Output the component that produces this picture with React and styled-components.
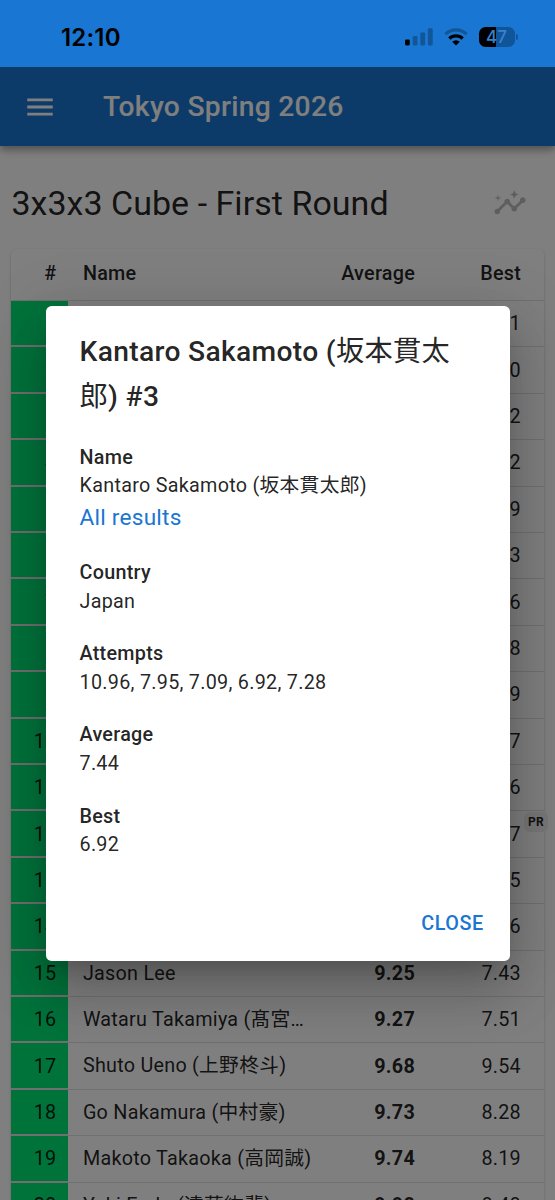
import React, { useState } from "react";
import styled, { createGlobalStyle } from "styled-components";
import { MdInsights, MdMenu } from "react-icons/md";

const results = [
  { ranking: 1, best: "5.81" },
  { ranking: 2, best: "6.40" },
  { ranking: 3, best: "6.92" },
  { ranking: 4, best: "6.52" },
  { ranking: 5, best: "7.09" },
  { ranking: 6, best: "6.83" },
  { ranking: 7, best: "7.36" },
  { ranking: 8, best: "7.18" },
  { ranking: 9, best: "7.49" },
  { ranking: 10, best: "7.67" },
  { ranking: 11, best: "7.36" },
  { ranking: 12, best: "7.57", pr: true },
  { ranking: 13, best: "8.15" },
  { ranking: 14, best: "7.96" },
  { ranking: 15, name: "Jason Lee", average: "9.25", best: "7.43" },
  { ranking: 16, name: "Wataru Takamiya (髙宮航瑠)", average: "9.27", best: "7.51" },
  { ranking: 17, name: "Shuto Ueno (上野柊斗)", average: "9.68", best: "9.54" },
  { ranking: 18, name: "Go Nakamura (中村豪)", average: "9.73", best: "8.28" },
  { ranking: 19, name: "Makoto Takaoka (高岡誠)", average: "9.74", best: "8.19" },
  { ranking: 20, name: "Yuki Endo (遠藤紘輩)", average: "9.98", best: "8.48" },
];

const details = [
  { label: "Name", value: "Kantaro Sakamoto (坂本貫太郎)", link: "All results" },
  { label: "Country", value: "Japan" },
  { label: "Attempts", value: "10.96, 7.95, 7.09, 6.92, 7.28" },
  { label: "Average", value: "7.44" },
  { label: "Best", value: "6.92" },
];

const StatusBar = () => (
  <StatusWrapper>
    <Time>12:10</Time>
    <StatusIcons>
      <svg width="28" height="18" viewBox="0 0 28 18">
        <rect x="0" y="11.4" width="4.8" height="6" rx="1.3" />
        <g opacity="0.27">
          <rect x="7.7" y="8" width="4.8" height="9.4" rx="1.3" />
          <rect x="15.3" y="4.5" width="4.8" height="12.9" rx="1.3" />
          <rect x="22.9" y="0.3" width="4.8" height="17.1" rx="1.3" />
        </g>
      </svg>
      <svg width="24" height="18" viewBox="0 0 24 18">
        <g fill="none" stroke="#000" strokeWidth="3.2">
          <path d="M1.4 6.2a15.2 15.2 0 0 1 21.2 0" opacity="0.27" />
          <path d="M5.3 10.5a9.6 9.6 0 0 1 13.4 0" />
        </g>
        <path d="M12 17.4 8.2 13.7a5.4 5.4 0 0 1 7.6 0z" />
      </svg>
      <Battery>
        <BatteryBody>47</BatteryBody>
        <BatteryTip />
      </Battery>
    </StatusIcons>
  </StatusWrapper>
);

const ResultDialog = ({ onClose }) => (
  <Backdrop>
    <Dialog role="dialog">
      <DialogTitle>
        Kantaro Sakamoto (<LocalName>坂本貫太郎</LocalName>) #3
      </DialogTitle>
      <DialogContent>
        {details.map(({ label, value, link }) => (
          <div key={label}>
            <Label>{label}</Label>
            <Value>{value}</Value>
            {link && <ResultsLink href="#">{link}</ResultsLink>}
          </div>
        ))}
      </DialogContent>
      <DialogActions>
        <CloseButton onClick={onClose}>Close</CloseButton>
      </DialogActions>
    </Dialog>
  </Backdrop>
);

const App = () => {
  const [dialogOpen, setDialogOpen] = useState(true);

  return (
    <>
      <GlobalStyle />
      <Screen>
        <StatusBar />
        <Page>
          <AppBar>
            <MdMenu size={34} />
            <AppTitle>Tokyo Spring 2026</AppTitle>
          </AppBar>
          <Main>
            <RoundHeader>
              <RoundTitle>3x3x3 Cube - First Round</RoundTitle>
              <InsightsIcon size={34} />
            </RoundHeader>
            <Table>
              <HeadRow>
                <HeadCell $right>#</HeadCell>
                <HeadCell>Name</HeadCell>
                <HeadCell $right>Average</HeadCell>
                <HeadCell $right>Best</HeadCell>
              </HeadRow>
              {results.map(({ ranking, name, average, best, pr }) => (
                <Row key={ranking} onClick={() => setDialogOpen(true)}>
                  <RankCell>{ranking}</RankCell>
                  <NameCell>{name}</NameCell>
                  <Cell $right $bold>
                    {average}
                  </Cell>
                  <Cell $right>
                    {best}
                    {pr && <RecordTag>PR</RecordTag>}
                  </Cell>
                </Row>
              ))}
            </Table>
          </Main>
          {dialogOpen && <ResultDialog onClose={() => setDialogOpen(false)} />}
        </Page>
      </Screen>
    </>
  );
};

export default App;

const GlobalStyle = createGlobalStyle`
  *, *::before, *::after {
    box-sizing: border-box;
  }
  body {
    margin: 0;
    overflow: hidden;
    color: rgba(0, 0, 0, 0.87);
    font-family: Roboto, "Noto Sans CJK JP", sans-serif;
  }
`;

const Screen = styled.div`
  display: flex;
  flex-direction: column;
  height: 1200px;
  overflow: hidden;
`;

const StatusWrapper = styled.div`
  display: flex;
  justify-content: space-between;
  flex-shrink: 0;
  height: 67px;
  padding: 0 37px 0 61px;
  background-color: #1976d2;
`;

const Time = styled.div`
  padding-top: 23px;
  color: #000;
  font-family: Inter, sans-serif;
  font-size: 24px;
  font-weight: 600;
  line-height: 30px;
  letter-spacing: 0.2px;
`;

const StatusIcons = styled.div`
  display: flex;
  align-items: flex-start;
  gap: 11px;
  padding-top: 28px;
`;

const Battery = styled.div`
  display: flex;
  align-items: center;
  gap: 1.5px;
  margin-top: -1px;
`;

const BatteryBody = styled.div`
  width: 36px;
  height: 20px;
  border-radius: 6.5px;
  background: linear-gradient(90deg, #000 47%, #10549a 47%);
  color: #3583d0;
  font-family: Inter, sans-serif;
  font-size: 17px;
  font-weight: 500;
  line-height: 20px;
  text-align: center;
`;

const BatteryTip = styled.div`
  width: 2px;
  height: 6px;
  border-radius: 0 3px 3px 0;
  background-color: #10549a;
`;

const Page = styled.div`
  position: relative;
  flex: 1;
  min-height: 0;
  overflow: hidden;
  background-color: #fff;
`;

const AppBar = styled.header`
  position: relative;
  display: flex;
  align-items: center;
  gap: 46px;
  height: 79px;
  padding: 0 23px;
  color: #fff;
  background-color: #1976d2;
  box-shadow: 0 3px 6px -1px rgba(0, 0, 0, 0.2),
    0 6px 7px 0 rgba(0, 0, 0, 0.14), 0 1px 14px 0 rgba(0, 0, 0, 0.12);
`;

const AppTitle = styled.div`
  font-size: 28.24px;
  font-weight: 500;
  letter-spacing: 0.01em;
`;

const Main = styled.main`
  padding: 34px 11px 0 11.4px;
`;

const RoundHeader = styled.div`
  display: flex;
  align-items: center;
  justify-content: space-between;
  height: 45px;
  margin-bottom: 23.5px;
  padding-right: 17px;
`;

const RoundTitle = styled.h1`
  margin: 0;
  padding-top: 1px;
  font-size: 34px;
  font-weight: 400;
  letter-spacing: 0.03px;
`;

const InsightsIcon = styled(MdInsights)`
  color: rgba(0, 0, 0, 0.26);
`;

const Table = styled.div`
  border-radius: 5.6px;
  background-color: #fff;
  box-shadow: 0 3px 1.5px -1.5px rgba(0, 0, 0, 0.2),
    0 1.5px 1.5px 0 rgba(0, 0, 0, 0.14), 0 1.5px 4px 0 rgba(0, 0, 0, 0.12);
`;

const Row = styled.div`
  display: grid;
  grid-template-columns: 57px 1fr 95px 129px;
  height: 46.42px;
  cursor: pointer;
`;

const HeadRow = styled(Row)`
  height: 52.4px;
  cursor: default;
`;

const Cell = styled.div`
  position: relative;
  display: flex;
  align-items: center;
  justify-content: ${({ $right }) => ($right ? "flex-end" : "flex-start")};
  min-width: 0;
  padding: 0 23px 0 14.5px;
  border-bottom: 1.4px solid #e0e0e0;
  font-size: 19.77px;
  font-weight: ${({ $bold }) => ($bold ? 700 : 400)};
  letter-spacing: 0.013em;
  white-space: nowrap;
  &:nth-child(3) {
    padding-right: 0;
  }
`;

const HeadCell = styled(Cell)`
  padding-bottom: 1px;
  font-weight: 500;
  &:first-child {
    padding-right: 12px;
  }
`;

const RankCell = styled(Cell)`
  justify-content: flex-end;
  padding-top: 1px;
  padding-right: 12px;
  border-bottom-width: 2px;
  background-color: #00e676;
  background-clip: padding-box;
`;

const NameCell = styled(Cell)`
  display: block;
  overflow: hidden;
  padding-right: 3px;
  line-height: 46px;
  text-overflow: ellipsis;
`;

const RecordTag = styled.span`
  position: absolute;
  top: 1px;
  right: -4px;
  padding: 3px 4px;
  border-radius: 5.6px;
  background-color: #eee;
  font-size: 12px;
  font-weight: 700;
  line-height: 14px;
`;

const Backdrop = styled.div`
  position: absolute;
  inset: 0;
  display: flex;
  align-items: center;
  justify-content: center;
  background-color: rgba(0, 0, 0, 0.5);
`;

const Dialog = styled.div`
  width: 464px;
  height: 655.5px;
  border-radius: 5.6px;
  background-color: #fff;
  box-shadow: 0 15.5px 21px -10px rgba(0, 0, 0, 0.2),
    0 34px 54px 4px rgba(0, 0, 0, 0.14), 0 13px 65px 11px rgba(0, 0, 0, 0.12);
`;

const DialogTitle = styled.h2`
  margin: 0;
  padding: 23.5px 30px 24.3px 34px;
  font-size: 28.24px;
  font-weight: 500;
  line-height: 45.2px;
  letter-spacing: 0.011em;
`;

const LocalName = styled.span`
  font-weight: 400;
`;

const DialogContent = styled.div`
  display: flex;
  flex-direction: column;
  gap: 24.5px;
  padding: 0 34px;
  font-size: 19.77px;
  line-height: 28.3px;
  letter-spacing: 0.014em;
`;

const Label = styled.div`
  font-weight: 500;
`;

const Value = styled.div`
  font-weight: 400;
`;

const ResultsLink = styled.a`
  display: block;
  color: #1976d2;
  font-size: 22.6px;
  line-height: 34.2px;
  letter-spacing: 0.011em;
  text-decoration: none;
`;

const DialogActions = styled.div`
  display: flex;
  justify-content: flex-end;
  padding: 39px 12px 0;
`;

const CloseButton = styled.button`
  padding: 8.5px 11.3px;
  width: 90px;
  border: 0;
  border-radius: 5.6px;
  color: #1976d2;
  background: transparent;
  font-family: inherit;
  font-size: 19.77px;
  font-weight: 500;
  line-height: 34.6px;
  letter-spacing: 0.03em;
  text-transform: uppercase;
  cursor: pointer;
`;
